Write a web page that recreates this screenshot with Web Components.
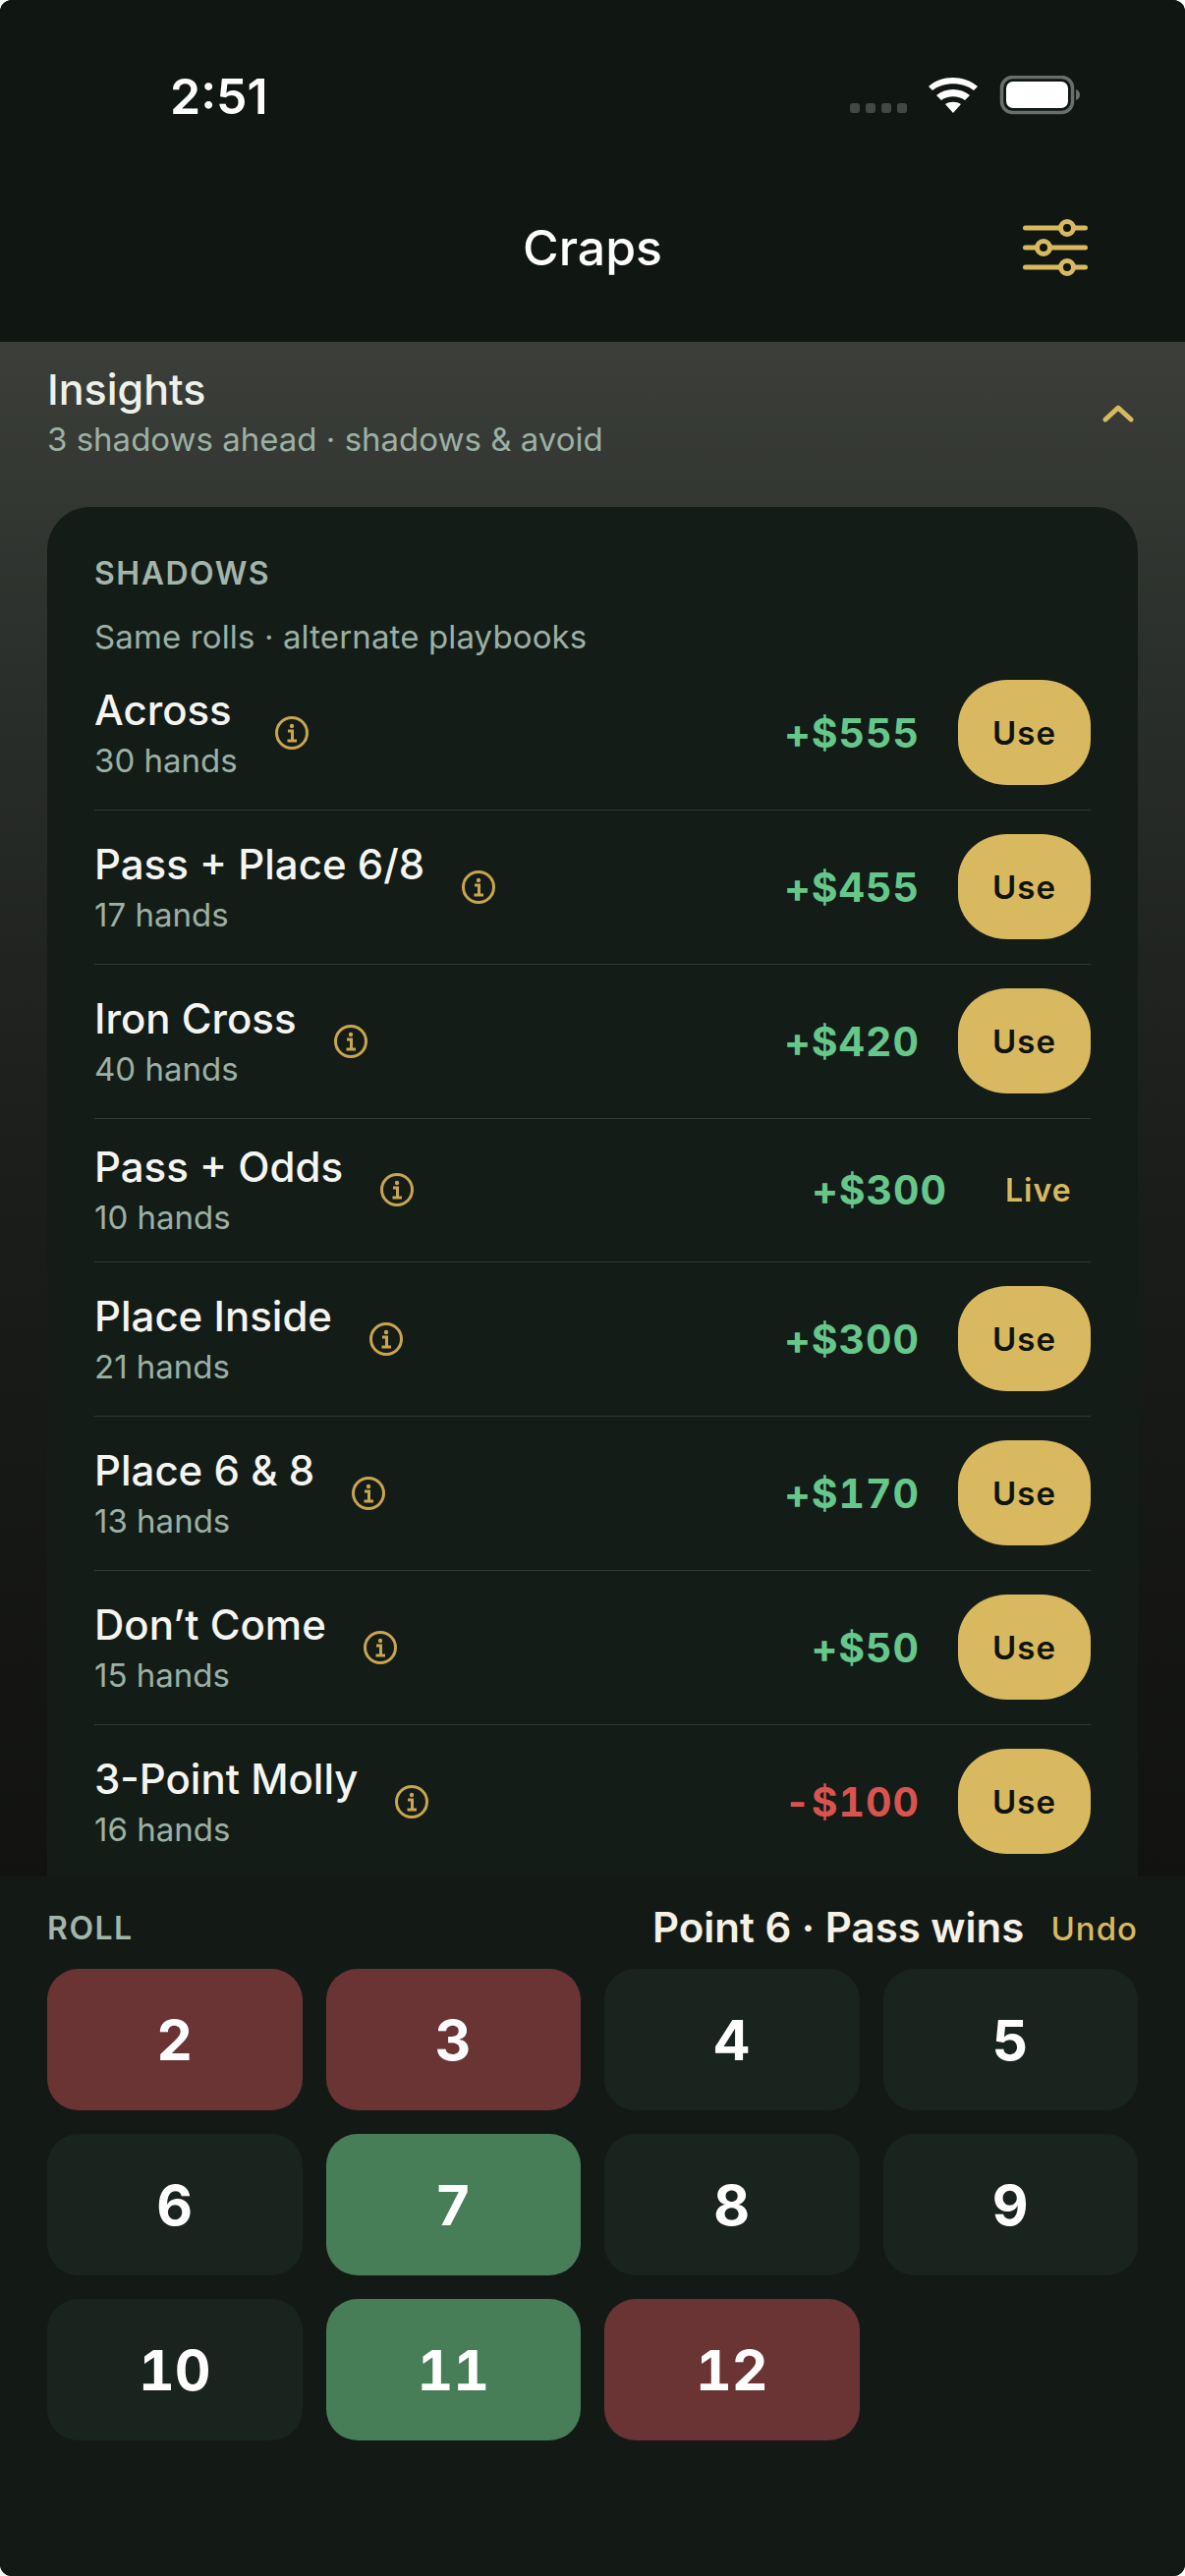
<!DOCTYPE html>
<html lang="en">
<head>
<meta charset="utf-8">
<title>Craps</title>
<style>
    html, body { margin: 0; padding: 0; background: #fff; }
    body { width: 1206px; height: 2622px; overflow: hidden; font-family: Inter, "Noto Sans", sans-serif; }
</style>
</head>
<body>
<craps-app></craps-app>
<script>
const GOLD = '#d9b95f';

class StatusBar extends HTMLElement {
    constructor() {
        super();
        this.attachShadow({ mode: 'open' });
        this.shadowRoot.innerHTML = `
            <style>
                :host { display: flex; justify-content: space-between; align-items: center; height: 60px; padding: 68px 105px 0 173px; }
                .time { font-size: 50px; font-weight: 600; color: #fff; line-height: 60px; }
                svg { display: block; }
            </style>
            <div class="time">2:51</div>
            <svg width="236" height="42" viewBox="0 0 236 42">
                <g fill="#434845">
                    <rect x="0" y="28" width="10" height="10" rx="3"/>
                    <rect x="16" y="28" width="10" height="10" rx="3"/>
                    <rect x="32" y="28" width="10" height="10" rx="3"/>
                    <rect x="48" y="28" width="10" height="10" rx="3"/>
                </g>
                <path d="M80 11 C93 -1 116 -1 130 11 L126 15 C115 6 95 6 84 15 Z M88 20 C97 12 113 12 122 20 L117 25 C110 20 100 20 93 25 Z M97 29 C102 26 108 26 113 29 L105 38 Z" fill="#fff"/>
                <rect x="154.500" y="1.500" width="72" height="36" rx="11" fill="none" stroke="#6a6e6c" stroke-width="3.500"/>
                <rect x="159" y="6" width="63" height="27" rx="7" fill="#fff"/>
                <path d="M230 14 C233 15 234 17 234 19.500 C234 22 233 24 230 25 Z" fill="#6a6e6c"/>
            </svg>
        `;
    }
}

class NavBar extends HTMLElement {
    constructor() {
        super();
        this.attachShadow({ mode: 'open' });
        this.shadowRoot.innerHTML = `
            <style>
                :host { display: grid; grid-template-columns: 1fr auto 1fr; align-items: center; height: 248px; padding: 0 99px; box-sizing: border-box; }
                .title { grid-column: 2; font-size: 50px; font-weight: 500; color: #fff; }
                svg { grid-column: 3; justify-self: end; display: block; }
            </style>
            <div class="title">Craps</div>
            <svg width="66" height="60" viewBox="0 0 66 60" fill="none" stroke="${GOLD}" stroke-width="5" stroke-linecap="round">
                <path d="M2.500 10 H63.500 M2.500 30 H63.500 M2.500 50 H63.500"/>
                <g fill="#101713">
                    <circle cx="45" cy="10" r="6.500"/>
                    <circle cx="21" cy="30" r="6.500"/>
                    <circle cx="45" cy="50" r="6.500"/>
                </g>
            </svg>
        `;
    }
}

class InsightsHeader extends HTMLElement {
    constructor() {
        super();
        this.attachShadow({ mode: 'open' });
        this.shadowRoot.innerHTML = `
            <style>
                :host { display: flex; justify-content: space-between; align-items: center; padding: 0 52px 0 48px; height: 140px; box-sizing: border-box; }
                .title { font-size: 43px; font-weight: 500; color: #eef0ea; line-height: 56px; }
                .sub { font-size: 33px; color: #9cb0a4; line-height: 44px; margin-top: 1px; }
                svg { display: block; margin-top: 6px; }
            </style>
            <div>
                <div class="title">Insights</div>
                <div class="sub">3 shadows ahead · shadows &amp; avoid</div>
            </div>
            <svg width="32" height="18" viewBox="0 0 32 18" fill="none" stroke="${GOLD}" stroke-width="5" stroke-linecap="round" stroke-linejoin="round">
                <path d="M3 15 L16 3 L29 15"/>
            </svg>
        `;
    }
}

class ShadowRow extends HTMLElement {
    constructor() {
        super();
        this.attachShadow({ mode: 'open' });
    }

    connectedCallback() {
        const live = this.hasAttribute('live');
        const amount = this.getAttribute('amount');
        this.shadowRoot.innerHTML = `
            <style>
                :host { display: flex; align-items: center; padding: 24px 0 25px; border-bottom: 1px solid #2e3a35; }
                :host(:last-of-type) { border-bottom: 0; }
                .text { display: flex; flex-direction: column; margin: -3px 0; }
                .name { font-size: 42px; font-weight: 500; color: #f4f5f1; line-height: 56px; white-space: nowrap; }
                .sub { font-size: 33px; color: #9cb0a4; line-height: 46px; white-space: nowrap; }
                svg { display: block; margin-left: 38px; flex: none; }
                .amount { margin-left: auto; font-size: 41px; font-weight: 650; letter-spacing: 1px; font-variant-numeric: tabular-nums; color: ${amount.startsWith('-') ? '#d9534f' : '#66c78a'}; }
                .use { margin-left: 39px; width: 135px; height: 107px; border-radius: 50px / 46px; background: ${GOLD}; color: #0f1411; font-size: 33px; font-weight: 600; letter-spacing: 1px; display: flex; align-items: center; justify-content: center; }
                .live { margin-left: 59px; width: 65px; padding-right: 22px; font-size: 32px; font-weight: 600; letter-spacing: 1px; color: ${GOLD}; }
            </style>
            <div class="text">
                <div class="name"><slot></slot></div>
                <div class="sub">${this.getAttribute('hands')} hands</div>
            </div>
            <svg width="34" height="34" viewBox="0 0 34 34" fill="none" stroke="#c9a550">
                <circle cx="17" cy="17" r="15.500" stroke-width="3"/>
                <circle cx="17" cy="10" r="2.200" fill="#c9a550" stroke="none"/>
                <path d="M13 15 H17.500 V25 M12.500 25 H22" stroke-width="3"/>
            </svg>
            <div class="amount">${amount}</div>
            ${live ? '<div class="live">Live</div>' : '<div class="use">Use</div>'}
        `;
    }
}

class ShadowsCard extends HTMLElement {
    constructor() {
        super();
        this.attachShadow({ mode: 'open' });
        this.shadowRoot.innerHTML = `
            <style>
                :host { display: block; margin: 28px 48px 0; padding: 48px 48px 0; background: #141c18; border-radius: 44px 44px 0 0; }
                .label { font-size: 32px; font-weight: 600; color: #a3b5aa; letter-spacing: 1.500px; line-height: 40px; }
                .sub { font-size: 33px; color: #9cb0a4; line-height: 40px; margin-top: 24px; letter-spacing: .13px; }
            </style>
            <div class="label">SHADOWS</div>
            <div class="sub">Same rolls · alternate playbooks</div>
            <slot></slot>
        `;
    }
}

class RollButton extends HTMLElement {
    constructor() {
        super();
        this.attachShadow({ mode: 'open' });
        this.shadowRoot.innerHTML = `
            <style>
                :host { display: flex; align-items: center; justify-content: center; height: 144px; border-radius: 32px; background: #1a241f; color: #fff; font-size: 57px; font-weight: 650; font-variant-numeric: tabular-nums; }
                :host([kind="red"]) { background: #6b3434; }
                :host([kind="green"]) { background: #477e57; }
            </style>
            <slot></slot>
        `;
    }
}

class RollPad extends HTMLElement {
    constructor() {
        super();
        this.attachShadow({ mode: 'open' });
        this.shadowRoot.innerHTML = `
            <style>
                :host { display: block; height: 712px; box-sizing: border-box; padding: 26px 48px 0; background: #131a16; }
                .head { display: flex; align-items: center; height: 56px; }
                .label { font-size: 32px; font-weight: 600; color: #a3b5aa; letter-spacing: 1.500px; margin-right: auto; padding-bottom: 3px; }
                .point { font-size: 42px; font-weight: 600; color: #f5f1e6; padding-bottom: 5px; }
                .undo { font-size: 33px; font-weight: 500; color: ${GOLD}; margin-left: 27px; letter-spacing: 1px; padding-bottom: 3px; }
                .grid { display: grid; grid-template-columns: repeat(4, 1fr); gap: 24px; margin-top: 12px; }
            </style>
            <div class="head">
                <div class="label">ROLL</div>
                <div class="point">Point 6 · Pass wins</div>
                <div class="undo">Undo</div>
            </div>
            <div class="grid"><slot></slot></div>
        `;
    }
}

class CrapsApp extends HTMLElement {
    constructor() {
        super();
        this.attachShadow({ mode: 'open' });
        this.shadowRoot.innerHTML = `
            <style>
                :host { display: flex; flex-direction: column; width: 1206px; height: 2622px; background: #131a16; overflow: hidden; border-radius: 12px; }
                .top { background: #101713; height: 348px; flex: none; overflow: hidden; }
                .panel { height: 1562px; flex: none; overflow: hidden; background: linear-gradient(#3b3e39 0, #2c302c 20%, #1e211e 45%, #181a18 65%, #121311 100%); }
            </style>
            <div class="top">
                <status-bar></status-bar>
                <nav-bar></nav-bar>
            </div>
            <div class="panel">
                <insights-header></insights-header>
                <shadows-card>
                    <shadow-row hands="30" amount="+$555">Across</shadow-row>
                    <shadow-row hands="17" amount="+$455">Pass + Place 6/8</shadow-row>
                    <shadow-row hands="40" amount="+$420">Iron Cross</shadow-row>
                    <shadow-row hands="10" amount="+$300" live>Pass + Odds</shadow-row>
                    <shadow-row hands="21" amount="+$300">Place Inside</shadow-row>
                    <shadow-row hands="13" amount="+$170">Place 6 &amp; 8</shadow-row>
                    <shadow-row hands="15" amount="+$50">Don’t Come</shadow-row>
                    <shadow-row hands="16" amount="-$100">3-Point Molly</shadow-row>
                </shadows-card>
            </div>
            <roll-pad>
                <roll-button kind="red">2</roll-button>
                <roll-button kind="red">3</roll-button>
                <roll-button>4</roll-button>
                <roll-button>5</roll-button>
                <roll-button>6</roll-button>
                <roll-button kind="green">7</roll-button>
                <roll-button>8</roll-button>
                <roll-button>9</roll-button>
                <roll-button>10</roll-button>
                <roll-button kind="green">11</roll-button>
                <roll-button kind="red">12</roll-button>
            </roll-pad>
        `;
    }
}

customElements.define('status-bar', StatusBar);
customElements.define('nav-bar', NavBar);
customElements.define('insights-header', InsightsHeader);
customElements.define('shadow-row', ShadowRow);
customElements.define('shadows-card', ShadowsCard);
customElements.define('roll-button', RollButton);
customElements.define('roll-pad', RollPad);
customElements.define('craps-app', CrapsApp);
</script>
</body>
</html>
